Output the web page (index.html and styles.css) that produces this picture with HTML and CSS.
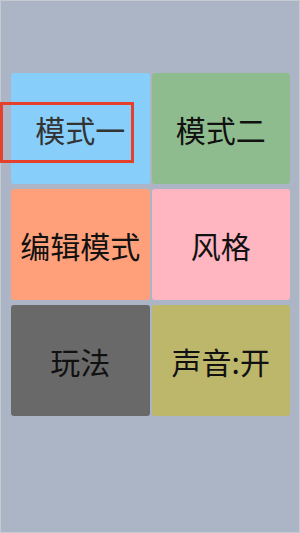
FILE: index.html
```html
<!DOCTYPE html>
<html lang="zh-CN">
<head>
    <meta charset="UTF-8">
    <meta name="viewport" content="width=device-width, initial-scale=1.0">
    <title>菜单</title>
    <link rel="stylesheet" href="styles.css">
</head>
<body>
    <div class="screen">
        <div class="menu">
            <div class="tile mode-one">模式一</div>
            <div class="tile mode-two">模式二</div>
            <div class="tile editor">编辑模式</div>
            <div class="tile style">风格</div>
            <div class="tile play">玩法</div>
            <div class="tile sound">声音:开</div>
        </div>
        <div class="highlight"></div>
    </div>
</body>
</html>
```

FILE: styles.css
```css
html, body {
    margin: 0;
    padding: 0;
}

body {
    font-family: "Noto Sans CJK SC", "Noto Sans", sans-serif;
    background-color: #abb5c5;
}

.screen {
    position: relative;
    box-sizing: border-box;
    width: 300px;
    height: 533px;
    border: 1px solid #c4c9d2;
    background-color: #abb5c5;
}

.menu {
    display: grid;
    grid-template-columns: 1fr 1fr;
    grid-auto-rows: 111px;
    column-gap: 2px;
    row-gap: 5px;
    margin-top: 72px;
    padding: 0 9px 0 10px;
}

.tile {
    display: flex;
    align-items: center;
    justify-content: center;
    border-radius: 3px;
    font-size: 30px;
    color: #111;
}

.mode-one {
    background-color: #87cefa;
    color: #333;
}

.mode-two {
    background-color: #8fbc8f;
}

.editor {
    background-color: #ffa07a;
}

.style {
    background-color: #ffb6c1;
}

.play {
    background-color: #696969;
}

.sound {
    background-color: #bdb76b;
}

.highlight {
    position: absolute;
    left: -1px;
    top: 101px;
    width: 128px;
    height: 55px;
    border: 3px solid #e5402c;
}
```
